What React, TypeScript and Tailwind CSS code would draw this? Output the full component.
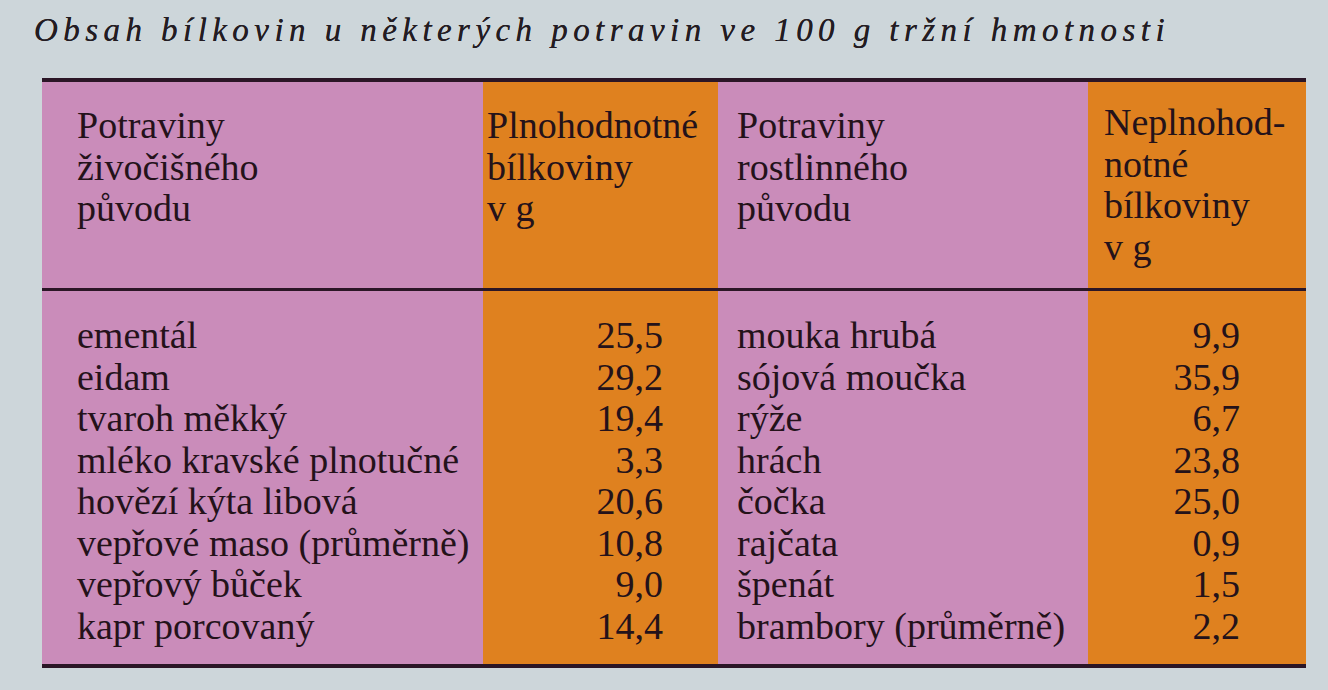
const rows = [
  { animal: 'ementál', a: '25,5', plant: 'mouka hrubá', p: '9,9' },
  { animal: 'eidam', a: '29,2', plant: 'sójová moučka', p: '35,9' },
  { animal: 'tvaroh měkký', a: '19,4', plant: 'rýže', p: '6,7' },
  { animal: 'mléko kravské plnotučné', a: '3,3', plant: 'hrách', p: '23,8' },
  { animal: 'hovězí kýta libová', a: '20,6', plant: 'čočka', p: '25,0' },
  { animal: 'vepřové maso (průměrně)', a: '10,8', plant: 'rajčata', p: '0,9' },
  { animal: 'vepřový bůček', a: '9,0', plant: 'špenát', p: '1,5' },
  { animal: 'kapr porcovaný', a: '14,4', plant: 'brambory (průměrně)', p: '2,2' },
];

const pink = 'bg-[#ca8cba]';
const orange = 'bg-[#df811f]';

export default function App() {
  return (
    <div
      className="h-[690px] w-[1328px] overflow-hidden bg-[#cdd6da] text-[#24121a]"
      style={{ fontFamily: '"Liberation Serif", "DejaVu Serif", serif' }}
    >
      <h1 className="pl-[34px] pt-[10px] text-[33px] italic leading-[40px] tracking-[0.165em] text-[#231c22] [text-shadow:0_0_0.4px_#231c22]">
        Obsah bílkovin u některých potravin ve 100 g tržní hmotnosti
      </h1>

      <div className="ml-[42px] mt-[28px] w-[1264px] border-y-[4px] border-[#2b1626] text-[38px] leading-[41.5px]">
        {/* header */}
        <div className="grid grid-cols-[441px_235px_370px_218px] border-b-[3px] border-[#2b1626]">
          <div className={`${pink} h-[206px] pl-[35px] pt-[23px]`}>
            <p>Potraviny</p>
            <p>živočišného</p>
            <p>původu</p>
          </div>
          <div className={`${orange} pl-[4px] pt-[23px]`}>
            <p>Plnohodnotné</p>
            <p>bílkoviny</p>
            <p>v g</p>
          </div>
          <div className={`${pink} pl-[19px] pt-[23px]`}>
            <p>Potraviny</p>
            <p>rostlinného</p>
            <p>původu</p>
          </div>
          <div className={`${orange} pl-[16px] pt-[20px]`}>
            <p>Neplnohod-</p>
            <p>notné</p>
            <p>bílkoviny</p>
            <p>v g</p>
          </div>
        </div>

        {/* body */}
        <div className="grid grid-cols-[441px_235px_370px_218px]">
          <div className={`${pink} pb-[17px] pl-[35px] pt-[24px]`}>
            {rows.map((r) => (
              <p key={r.animal} className="whitespace-nowrap">{r.animal}</p>
            ))}
          </div>
          <div className={`${orange} pr-[55px] pt-[24px] text-right`}>
            {rows.map((r) => (
              <p key={r.animal}>{r.a}</p>
            ))}
          </div>
          <div className={`${pink} pl-[19px] pt-[24px]`}>
            {rows.map((r) => (
              <p key={r.plant} className="whitespace-nowrap">{r.plant}</p>
            ))}
          </div>
          <div className={`${orange} pr-[66px] pt-[24px] text-right`}>
            {rows.map((r) => (
              <p key={r.plant}>{r.p}</p>
            ))}
          </div>
        </div>
      </div>
    </div>
  );
}
